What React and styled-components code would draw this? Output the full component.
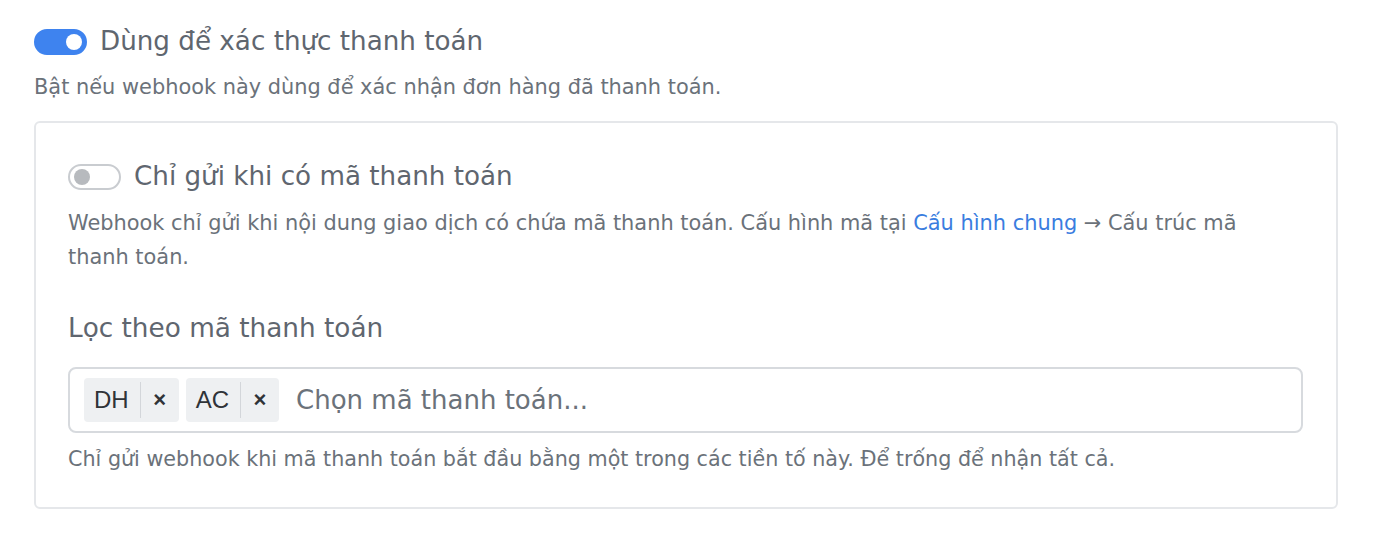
import React from 'react'
import styled, { createGlobalStyle } from 'styled-components'

const GlobalStyle = createGlobalStyle`
  html, body {
    margin: 0;
    padding: 0;
    background: #ffffff;
  }
  body {
    font-family: "DejaVu Sans", "Noto Sans", sans-serif;
    color: #666d75;
  }
`

const Page = styled.div`
  padding: 22px 36px 0 34px;
`

const SwitchRow = styled.label`
  display: flex;
  align-items: center;
  gap: 13px;
  height: 39px;
`

const Switch = styled.span`
  position: relative;
  box-sizing: border-box;
  width: 53px;
  height: 26px;
  border-radius: 13px;
  flex-shrink: 0;
  background: ${(p) => (p.$on ? '#3e83ef' : '#ffffff')};
  border: 2px solid ${(p) => (p.$on ? '#3e83ef' : '#c9ccd0')};

  &::after {
    content: '';
    position: absolute;
    top: 3px;
    left: ${(p) => (p.$on ? '30px' : '4px')};
    width: 16px;
    height: 16px;
    border-radius: 50%;
    background: ${(p) => (p.$on ? '#ffffff' : '#b7babe')};
  }
`

const SwitchLabel = styled.span`
  font-size: 26.2px;
  line-height: 39px;
  color: #5f666f;
`

const Help = styled.p`
  margin: ${(p) => p.$margin || '0'};
  max-width: ${(p) => p.$max || 'none'};
  font-size: ${(p) => p.$size || '20.9px'};
  line-height: ${(p) => p.$lh || '32px'};
  color: #6b727a;
`

const Link = styled.a`
  color: #3a7ddf;
  text-decoration: none;
`

const Card = styled.div`
  margin-top: 18px;
  border: 2px solid #e5e7ea;
  border-radius: 6px;
  padding: 34px 32px 32px 32px;
`

const FieldLabel = styled.div`
  margin-top: 35px;
  font-size: 26.3px;
  line-height: 39px;
  color: #5f666f;
`

const TagInput = styled.div`
  display: flex;
  align-items: center;
  gap: 7px;
  margin-top: 19px;
  margin-right: 1px;
  height: 66px;
  box-sizing: border-box;
  border: 2px solid #d7dade;
  border-radius: 8px;
  padding: 0 14px;
`

const Chip = styled.span`
  display: flex;
  align-items: stretch;
  height: 44px;
  background: #eef0f2;
  border-radius: 4px;
  font-family: "Liberation Sans", Arial, sans-serif;
  color: #2f3338;
`

const ChipText = styled.span`
  display: flex;
  align-items: center;
  padding: 0 11px 0 10px;
  font-size: 24px;
  border-right: 1px solid #d3d6da;
  margin: 4px 0;
`

const ChipRemove = styled.span`
  display: flex;
  align-items: center;
  justify-content: center;
  width: 38px;
  font-size: 22px;
  font-weight: bold;
`

const Placeholder = styled.span`
  margin-left: 10px;
  font-size: 26px;
  color: #6b727a;
`

const tags = ['DH', 'AC']

export default function App() {
  return (
    <>
      <GlobalStyle />
      <Page>
        <SwitchRow>
          <Switch $on />
          <SwitchLabel>Dùng để xác thực thanh toán</SwitchLabel>
        </SwitchRow>
        <Help $margin="10px 0 0">
          Bật nếu webhook này dùng để xác nhận đơn hàng đã thanh toán.
        </Help>

        <Card>
          <SwitchRow>
            <Switch />
            <SwitchLabel>Chỉ gửi khi có mã thanh toán</SwitchLabel>
          </SwitchRow>
          <Help $margin="10px 0 0" $lh="34px" $max="1200px">
            Webhook chỉ gửi khi nội dung giao dịch có chứa mã thanh toán. Cấu
            hình mã tại <Link href="#">Cấu hình chung</Link> → Cấu trúc mã
            thanh toán.
          </Help>

          <FieldLabel>Lọc theo mã thanh toán</FieldLabel>
          <TagInput>
            {tags.map((t) => (
              <Chip key={t}>
                <ChipText>{t}</ChipText>
                <ChipRemove>×</ChipRemove>
              </Chip>
            ))}
            <Placeholder>Chọn mã thanh toán...</Placeholder>
          </TagInput>
          <Help $margin="10px 0 0" $size="20.7px">
            Chỉ gửi webhook khi mã thanh toán bắt đầu bằng một trong các tiền
            tố này. Để trống để nhận tất cả.
          </Help>
        </Card>
      </Page>
    </>
  )
}
